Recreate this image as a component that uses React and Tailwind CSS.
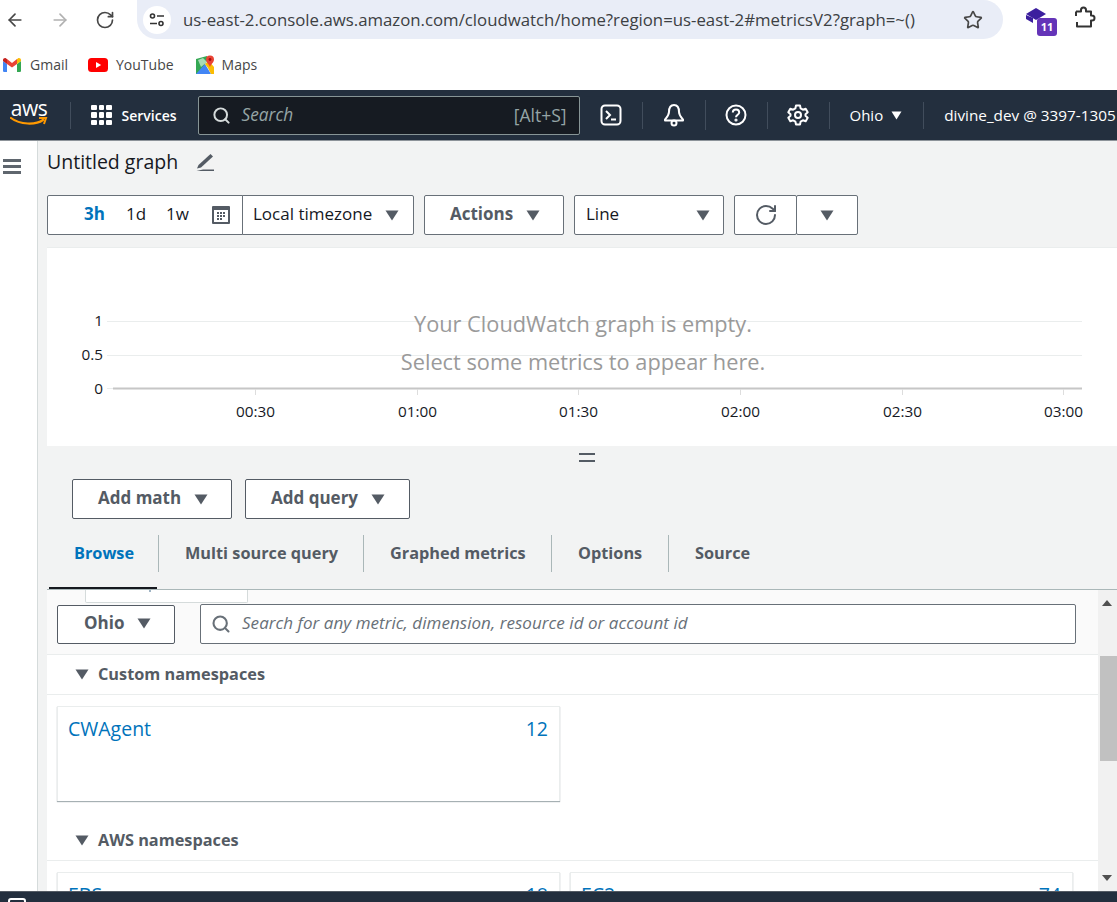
import { ArrowLeft, ArrowRight, RotateCw, Star, Search } from 'lucide-react'

const Caret = ({ className = '' }) => (
  <svg width="14" height="11" viewBox="0 0 14 11" className={className}>
    <path d="M0.5 0.5H13.5L7 10.5Z" fill="#545b64" />
  </svg>
)

const GmailIcon = () => (
  <svg width="18" height="14" viewBox="0 0 18 14">
    <path d="M0 3V12.5A1.3 1.3 0 0 0 1.3 14H4V6Z" fill="#4285f4" />
    <path d="M14 6V14H16.7A1.3 1.3 0 0 0 18 12.5V3Z" fill="#34a853" />
    <path d="M4 6V1L9 5L14 1V6L9 9.6Z" fill="#ea4335" />
    <path d="M0 3V2C0 .4 1.9 -.5 3.1 .4L4 1V6Z" fill="#c5221f" />
    <path d="M14 6V1L14.9 .4C16.1 -.5 18 .4 18 2V3Z" fill="#fbbc04" />
  </svg>
)

const YoutubeIcon = () => (
  <svg width="20" height="14" viewBox="0 0 20 14">
    <rect width="20" height="14" rx="3.5" fill="#f00" />
    <path d="M8 4L13.2 7L8 10Z" fill="#fff" />
  </svg>
)

const MapsIcon = () => (
  <svg width="20" height="20" viewBox="0 0 20 20">
    <path d="M1 4L12 1V6L4 19H1Z" fill="#34a853" />
    <path d="M1 19L10 9L16 19Z" fill="#4285f4" />
    <path d="M3 5L8 3L12 7L6 12Z" fill="#a8dab5" />
    <path d="M10 9L13 13L16 19H19V12L14 6Z" fill="#fbbc04" />
    <path d="M15 0.5A4 4 0 0 1 19 4.5C19 7.5 16 9 15 12C14 9 11 7.5 11 4.5A4 4 0 0 1 15 0.5Z" fill="#ea4335" />
    <circle cx="15" cy="4.5" r="1.4" fill="#a50e0e" />
  </svg>
)

const Divider = ({ h = 'h-[27px]' }) => <div className={`w-px ${h} bg-[#414d5c]`} />

function ChromeBar() {
  return (
    <div className="h-[90px] bg-white shrink-0">
      <div className="h-[45px] flex items-start">
        <div className="flex items-center h-[39px] pl-[5px] gap-[25px] w-[137px]">
          <ArrowLeft size={20} color="#474747" strokeWidth={2} />
          <ArrowRight size={20} color="#b1b1b1" strokeWidth={2} />
          <RotateCw size={20} color="#474747" strokeWidth={2} />
        </div>
        <div className="w-[866px] h-[39px] bg-[#e9edf7] rounded-r-[20px] rounded-bl-[20px] flex items-center pl-[6px]">
          <div className="w-[28px] h-[28px] rounded-full bg-white flex items-center justify-center">
            <svg width="16" height="14" viewBox="0 0 16 14" fill="none" stroke="#333" strokeWidth="1.6">
              <circle cx="3.5" cy="3" r="2" />
              <path d="M8 3H15M1 10.5H8" />
              <circle cx="12" cy="10.5" r="2" />
            </svg>
          </div>
          <span className="ml-[12px] text-[16.8px] text-[#3c4043] whitespace-nowrap">
            us-east-2.console.aws.amazon.com/cloudwatch/home?region=us-east-2#metricsV2?graph=~()
          </span>
          <Star size={20} color="#474747" strokeWidth={2} className="ml-auto mr-[20px]" />
        </div>
        <div className="relative ml-[22px] mt-[6px] w-[32px] h-[32px]">
          <svg width="22" height="20" viewBox="0 0 22 20" className="mt-[1px]">
            <path d="M11 1L21 7L11 13L1 7Z" fill="#3c1f9e" />
            <path d="M1 8V12L8 16V11Z" fill="#3c1f9e" />
          </svg>
          <span className="absolute left-[12px] top-[12px] w-[20px] h-[18px] rounded-[3px] bg-[#6434b8] text-white text-[11px] font-bold flex items-center justify-center">11</span>
        </div>
        <svg width="22" height="22" viewBox="0 0 22 22" fill="none" stroke="#333" strokeWidth="2" className="ml-[17px] mt-[6px]">
          <path d="M2 5.5H7V4A2.5 2.5 0 0 1 12 4V5.5H17V9.5H18A2.5 2.5 0 0 1 18 14.5H17V20.5H3V16" strokeLinejoin="round" />
          <path d="M2 5.5V10" />
        </svg>
      </div>
      <div className="h-[39px] flex items-center text-[14px] text-[#474747]">
        <div className="ml-[3px] flex items-center"><GmailIcon /></div>
        <span className="ml-[9px]">Gmail</span>
        <div className="ml-[20px] flex items-center"><YoutubeIcon /></div>
        <span className="ml-[8px]">YouTube</span>
        <div className="ml-[21px] flex items-center"><MapsIcon /></div>
        <span className="ml-[7px]">Maps</span>
      </div>
    </div>
  )
}

function AwsNav() {
  return (
    <div className="h-[51px] shrink-0 bg-[#232f3e] border-b border-[#8d9399] flex items-center text-white text-[14px] whitespace-nowrap">
      <div className="ml-[10px] w-[38px] h-[32px] relative">
        <span className="block text-[21px] leading-[18px] text-center tracking-[-0.5px]">aws</span>
        <svg width="38" height="12" viewBox="0 0 38 12" className="absolute left-0 top-[17px]">
          <path d="M1 2C10 9 26 9 33 4" fill="none" stroke="#ff9900" strokeWidth="2.2" strokeLinecap="round" />
          <path d="M29 2L36 2L34 8" fill="none" stroke="#ff9900" strokeWidth="2" />
        </svg>
      </div>
      <div className="ml-[22px]"><Divider /></div>
      <div className="ml-[20px] grid grid-cols-3 gap-[2px]">
        {[0, 1, 2, 3, 4, 5, 6, 7, 8].map((i) => (
          <div key={i} className="w-[5.5px] h-[5.5px] bg-white rounded-[1px]" />
        ))}
      </div>
      <span className="ml-[10px] font-semibold w-[56px]">Services</span>
      <div className="ml-[20px] w-[382px] h-[39px] bg-[#161b22] border border-[#879596] rounded-[2px] flex items-center">
        <Search size={19} color="#d5dbdb" strokeWidth={2.5} className="ml-[13px]" />
        <span className="ml-[11px] text-[17.3px] italic text-[#95a5a6]">Search</span>
        <span className="ml-auto mr-[12px] text-[17.5px] text-[#95a5a6]">[Alt+S]</span>
      </div>
      <svg width="22" height="22" viewBox="0 0 22 22" fill="none" stroke="#fff" strokeWidth="2" className="ml-[20px]">
        <rect x="1.5" y="1.5" width="19" height="19" rx="3.5" />
        <path d="M6 7L10 11L6 15M11 15.5H16" />
      </svg>
      <div className="ml-[20px]"><Divider /></div>
      <svg width="22" height="24" viewBox="0 0 22 24" fill="none" stroke="#fff" strokeWidth="2" className="ml-[20px]">
        <path d="M11 2C7 2 6 5.5 6 9C6 12 4 14 2 16.5V17.5H20V16.5C18 14 16 12 16 9C16 5.5 15 2 11 2Z" strokeLinejoin="round" />
        <circle cx="11" cy="20" r="2.5" />
      </svg>
      <div className="ml-[20px]"><Divider h="h-[30px]" /></div>
      <svg width="22" height="22" viewBox="0 0 22 22" fill="none" stroke="#fff" strokeWidth="2" className="ml-[19px]">
        <circle cx="11" cy="11" r="9.5" />
        <path d="M7.8 8.5C7.8 6.5 9.5 5.6 11 5.6C13 5.6 14.2 7 14.2 8.4C14.2 10.6 11 10.8 11 13.2" />
        <circle cx="11" cy="16" r="0.6" fill="#fff" />
      </svg>
      <div className="ml-[20px]"><Divider /></div>
      <svg width="22" height="22" viewBox="0 0 22 22" fill="none" stroke="#fff" strokeWidth="2" className="ml-[19px]">
        <circle cx="11" cy="11" r="3" />
        <path d="M9 1.5H13L13.6 4.4L15.9 5.7L18.7 4.8L20.7 8.2L18.5 10.2V11.8L20.7 13.8L18.7 17.2L15.9 16.3L13.6 17.6L13 20.5H9L8.4 17.6L6.1 16.3L3.3 17.2L1.3 13.8L3.5 11.8V10.2L1.3 8.2L3.3 4.8L6.1 5.7L8.4 4.4Z" strokeLinejoin="round" />
      </svg>
      <div className="ml-[20px]"><Divider /></div>
      <span className="ml-[20px] text-[15px]">Ohio</span>
      <svg width="11" height="9" viewBox="0 0 11 9" className="ml-[8px]"><path d="M0.5 0.5H10.5L5.5 8.5Z" fill="#fff" /></svg>
      <div className="ml-[21px]"><Divider /></div>
      <span className="ml-[20px] text-[15.3px]">divine_dev @ 3397-1305</span>
    </div>
  )
}

function Toolbar() {
  const box = 'h-[40px] pb-[2px] bg-white border border-[#687078] rounded-[2px] flex items-center'
  return (
    <div className="flex mt-[12px] h-[40px] text-[17px] text-[#16191f]">
      <div className={`${box} w-[196px] rounded-r-none`}>
        <span className="ml-[36px] font-bold text-[#0073bb]">3h</span>
        <span className="ml-[21px]">1d</span>
        <span className="ml-[20px]">1w</span>
        <svg width="18" height="18" viewBox="0 0 18 18" className="ml-[23px] mt-[2px]">
          <rect width="18" height="18" rx="1" fill="#545b64" />
          <rect x="2" y="4" width="14" height="12" fill="#fff" />
          <path d="M5 6H7V8H5ZM8 6H10V8H8ZM11 6H13V8H11ZM5 9H7V11H5ZM8 9H10V11H8ZM11 9H13V11H11ZM5 12H7V14H5ZM8 12H10V14H8Z" fill="#545b64" />
        </svg>
      </div>
      <div className={`${box} w-[172px] -ml-px rounded-l-none`}>
        <span className="ml-[10px]">Local timezone</span>
        <Caret className="ml-[13px] mt-[2px]" />
      </div>
      <div className={`${box} w-[140px] ml-[10px] font-bold text-[#545b64]`}>
        <span className="ml-[25px]">Actions</span>
        <Caret className="ml-[13px] mt-[2px]" />
      </div>
      <div className={`${box} w-[150px] ml-[10px]`}>
        <span className="ml-[11px]">Line</span>
        <Caret className="ml-auto mr-[13px] mt-[2px]" />
      </div>
      <div className={`${box} w-[63px] ml-[10px] justify-center`}>
        <RotateCw size={24} color="#545b64" strokeWidth={2} className="mt-[2px]" />
      </div>
      <div className={`${box} w-[62px] -ml-px justify-center`}>
        <Caret className="mt-[2px]" />
      </div>
    </div>
  )
}

function Chart() {
  const xs = [
    [255, '00:30'],
    [417, '01:00'],
    [578, '01:30'],
    [740, '02:00'],
    [902, '02:30'],
    [1063, '03:00'],
  ]
  return (
    <div className="relative mt-[12px] h-[199px] bg-white border-t border-[#eaeded]">
      <svg width="1070" height="198" viewBox="47 248 1070 198" className="block text-[15.3px]">
        <path d="M107 321.5H1082M107 355.5H1082" stroke="#eaeded" />
        <path d="M107 388.5H113" stroke="#eaeded" />
        <path d="M113 388.5H1082" stroke="#c6c6c6" strokeWidth="2" />
        <text x="103" y="326" textAnchor="end" fill="#16191f">1</text>
        <text x="103" y="360" textAnchor="end" fill="#16191f">0.5</text>
        <text x="103" y="394" textAnchor="end" fill="#16191f">0</text>
        {xs.map(([x, label]) => (
          <g key={label}>
            <path d={`M${x + 0.5} 389V395`} stroke="#dddddd" />
            <text x={x + 0.5} y="417" textAnchor="middle" fill="#16191f">{label}</text>
          </g>
        ))}
      </svg>
      <div className="absolute left-0 top-[57px] w-[1072px] text-center text-[21.75px] leading-[38px] text-[#9a9a9a]">
        <div>Your CloudWatch graph is empty.</div>
        <div>Select some metrics to appear here.</div>
      </div>
    </div>
  )
}

const Tab = ({ label, active, className = '' }) => (
  <div className={`h-[37px] flex items-center font-bold text-[16.3px] ${active ? 'text-[#0073bb]' : 'text-[#545b64]'} ${className}`}>{label}</div>
)

const NsRow = ({ label }) => (
  <div className="h-[40px] shrink-0 bg-white border-b border-[#eaeded] flex items-center font-bold text-[16.3px] text-[#545b64]">
    <Caret className="ml-[28px]" />
    <span className="ml-[9px]">{label}</span>
  </div>
)

const NsCard = ({ name, count, className = '' }) => (
  <div className={`w-[503px] h-[95px] shrink-0 bg-white border-t border-x border-[#eaeded] shadow-[0_1px_1px_0_rgba(0,28,36,0.35)] px-[10px] pt-[9px] flex justify-between text-[19.5px] leading-[26px] text-[#0073bb] ${className}`}>
    <span>{name}</span>
    <span className="mr-px">{count}</span>
  </div>
)

function MetricsPanel() {
  return (
    <div className="relative flex-1 min-h-0 flex border-t border-[#aab7b8] overflow-hidden">
      <div className="absolute left-[38px] top-0 w-[163px] h-[13px] bg-white border border-t-0 border-[#d5dbdb] rounded-b-[2px]" />
      <div className="absolute left-[102px] top-0 w-[2px] h-[2px] bg-[#9fb4c4]" />
      <div className="w-[1051px] flex flex-col min-h-0 shrink-0 bg-white">
        <div className="h-[65px] pt-[3px] shrink-0 bg-[#fafafa] border-b border-[#eaeded] flex items-center text-[17px]">
          <div className="relative ml-[10px] mt-[1px] w-[118px] h-[39px] pb-[2px] bg-white border border-[#545b64] rounded-[2px] flex items-center font-bold text-[#545b64]">
            <span className="ml-[26px]">Ohio</span>
            <Caret className="ml-[13px]" />
          </div>
          <div className="relative ml-[25px] w-[876px] h-[40px] pb-[1px] bg-white border border-[#687078] rounded-[2px] flex items-center">
            <Search size={20} color="#687078" strokeWidth={2.5} className="ml-[10px] mt-[2px]" />
            <span className="ml-[11px] italic tracking-[0.05px] text-[#687078]">Search for any metric, dimension, resource id or account id</span>
          </div>
        </div>
        <NsRow label="Custom namespaces" />
        <div className="flex px-[10px] pt-[11px] h-[126px] shrink-0">
          <NsCard name="CWAgent" count="12" />
        </div>
        <NsRow label="AWS namespaces" />
        <div className="flex gap-[10px] px-[10px] pt-[11px]">
          <NsCard name="EBS" count="18" />
          <NsCard name="EC2" count="74" />
        </div>
      </div>
      <div className="w-[19px] shrink-0 bg-[#f1f1f1] relative">
        <svg width="10" height="6" viewBox="0 0 10 6" className="absolute left-[4px] top-[10px]"><path d="M5 0L10 6H0Z" fill="#505050" /></svg>
        <div className="absolute right-0 top-[66px] w-[17px] h-[105px] bg-[#c1c1c1]" />
        <svg width="10" height="6" viewBox="0 0 10 6" className="absolute left-[4px] bottom-[10px]"><path d="M0 0H10L5 6Z" fill="#505050" /></svg>
      </div>
    </div>
  )
}

export default function App() {
  const btn = 'h-[40px] pb-[2px] bg-white border border-[#545b64] rounded-[2px] flex items-center font-bold text-[17px] text-[#545b64]'
  return (
    <div className="w-[1117px] h-[902px] overflow-hidden flex flex-col bg-white font-['Open_Sans',sans-serif]">
      <ChromeBar />
      <AwsNav />
      <div className="flex-1 min-h-0 flex">
        <div className="w-[38px] shrink-0 bg-white border-r border-[#d5dbdb] pt-[18px] pl-[3px]">
          <div className="w-[18px] flex flex-col gap-[3px]">
            <div className="h-[3px] bg-[#5f666e]" />
            <div className="h-[3px] bg-[#5f666e]" />
            <div className="h-[3px] bg-[#5f666e]" />
          </div>
        </div>
        <div className="w-[1079px] bg-[#f2f3f3] pl-[9px] flex flex-col min-h-0">
          <div className="h-[41px] mt-[1px] pb-[2px] shrink-0 flex items-center text-[19.5px] text-[#16191f]">
            <span>Untitled graph</span>
            <svg width="20" height="19" viewBox="0 0 20 19" className="ml-[17px] mt-[2px]" fill="#545b64">
              <path d="M15.5 1L18 3.5L6 14.5L2 15.5L3.5 12Z" />
              <path d="M8 16.5H19V18H1.5Z" />
            </svg>
          </div>
          <Toolbar />
          <Chart />
          <div className="h-[33px] shrink-0 relative">
            <div className="absolute left-[532px] top-[7px] w-[16px] h-[9px] border-y-2 border-[#545b64]" />
          </div>
          <div className="flex shrink-0 gap-[13px] ml-[25px]">
            <div className={`${btn} w-[160px]`}>
              <span className="ml-[25px]">Add math</span>
              <Caret className="ml-[13px] mt-[2px]" />
            </div>
            <div className={`${btn} w-[165px]`}>
              <span className="ml-[25px]">Add query</span>
              <Caret className="ml-[13px] mt-[2px]" />
            </div>
          </div>
          <div className="relative h-[70px] shrink-0 pt-[16px] flex items-start">
            <Tab label="Browse" active className="ml-[27px] w-[84px]" />
            <div className="w-px h-[37px] bg-[#aab7b8]" />
            <Tab label="Multi source query" className="ml-[26px] w-[178px]" />
            <div className="w-px h-[37px] bg-[#aab7b8]" />
            <Tab label="Graphed metrics" className="ml-[26px] w-[161px]" />
            <div className="w-px h-[37px] bg-[#aab7b8]" />
            <Tab label="Options" className="ml-[26px] w-[90px]" />
            <div className="w-px h-[37px] bg-[#aab7b8]" />
            <Tab label="Source" className="ml-[26px]" />
            <div className="absolute left-[2px] bottom-0 w-[108px] h-[2px] bg-[#16191f]" />
          </div>
          <MetricsPanel />
        </div>
      </div>
      <div className="h-[11px] shrink-0 bg-[#232f3e] border-t border-[#545b64] overflow-hidden relative">
        <div className="absolute left-[8px] top-[6px] w-[18px] h-[14px] border-2 border-white rounded-[3px]" />
      </div>
    </div>
  )
}
